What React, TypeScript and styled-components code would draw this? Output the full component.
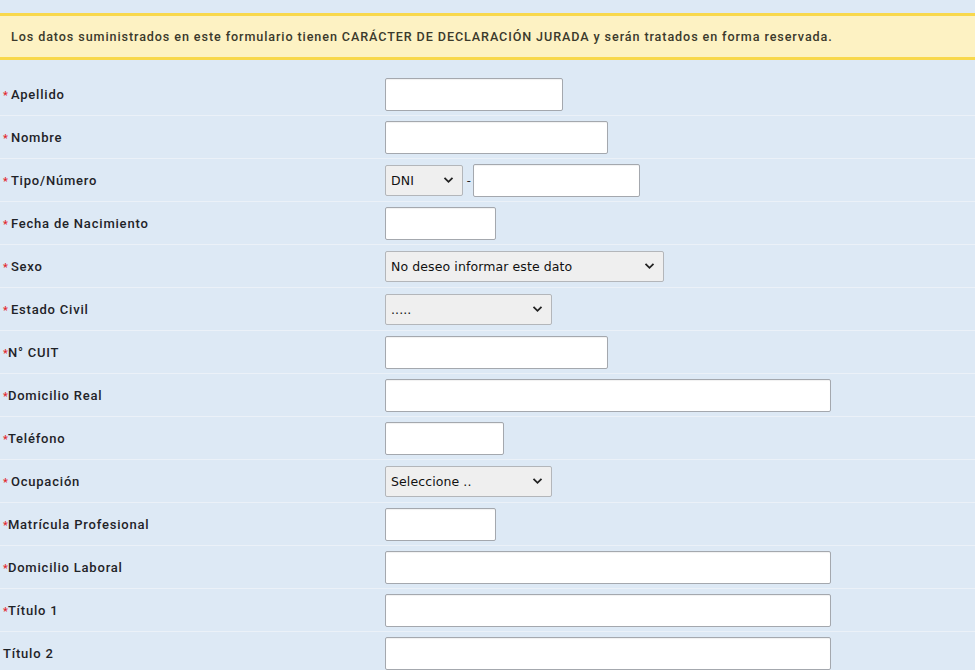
import React from "react";
import styled, { createGlobalStyle } from "styled-components";

const Global = createGlobalStyle`
  html, body { margin: 0; padding: 0; background: #dde9f5; }
  body { font-family: Roboto, "Liberation Sans", sans-serif; overflow: hidden; }
`;

const Page = styled.div`
  width: 975px;
  height: 670px;
  background: #dde9f5;
  padding-top: 13px;
  box-sizing: border-box;
  overflow: hidden;
`;

const Banner = styled.div`
  background: #fdf2c3;
  border-top: 3px solid #f8d84c;
  border-bottom: 3px solid #f8d84c;
  height: 41px;
  display: flex;
  align-items: center;
  padding-left: 11px;
  font-size: 12.6px;
  color: #3b3a2c;
  font-weight: 500;
  letter-spacing: 0.9px;
  white-space: nowrap;
`;

const Form = styled.div`
  margin-top: 13px;
  display: flex;
  flex-direction: column;
`;

const Row = styled.div`
  display: grid;
  grid-template-columns: 385px 1fr;
  align-items: center;
  height: 43px;
  border-bottom: 1px solid #ebf1f8;
  box-sizing: border-box;
`;

const Label = styled.div`
  padding-left: 3px;
  font-size: 13px;
  font-weight: 500;
  letter-spacing: 0.8px;
  color: #1f2328;
  display: flex;
  align-items: baseline;
`;

const Star = styled.span<{ $gap?: boolean }>`
  color: #e2262b;
  font-size: 11px;
  letter-spacing: 0;
  margin-right: ${(p) => (p.$gap ? "3px" : "0")};
`;

const Controls = styled.div`
  display: flex;
  align-items: center;
`;

const Input = styled.input<{ $w: number }>`
  width: ${(p) => p.$w}px;
  height: 33px;
  box-sizing: border-box;
  background: #fff;
  border: 1px solid #a4a8ae;
  border-radius: 2px;
  box-shadow: inset 0 1px 1px rgba(0, 0, 0, 0.06);
  margin: 0;
  padding: 0 6px;
`;

const SelectBox = styled.div<{ $w: number }>`
  width: ${(p) => p.$w}px;
  height: 31px;
  box-sizing: border-box;
  background: #efefef;
  border: 1px solid #b3b6ba;
  border-radius: 2px;
  display: flex;
  align-items: center;
  justify-content: space-between;
  padding: 0 8px 0 5px;
  font-family: "DejaVu Sans", "Liberation Sans", sans-serif;
  font-size: 12.5px;
  letter-spacing: 0.1px;
  color: #111;
`;

const Dash = styled.span`
  margin: 0 2px 0 4px;
  font-size: 13px;
  color: #222;
`;

const Chevron = () => (
  <svg width="11" height="8" viewBox="0 0 11 8">
    <path d="M1.5 1.8 L5.5 5.8 L9.5 1.8" fill="none" stroke="#222" strokeWidth="1.8" />
  </svg>
);

const Select = ({ w, text }: { w: number; text: string }) => (
  <SelectBox $w={w}>
    <span>{text}</span>
    <Chevron />
  </SelectBox>
);

type Field = {
  label: string;
  star: "gap" | "tight" | "none";
  control: React.ReactNode;
};

const fields: Field[] = [
  { label: "Apellido", star: "gap", control: <Input $w={178} /> },
  { label: "Nombre", star: "gap", control: <Input $w={223} /> },
  {
    label: "Tipo/Número",
    star: "gap",
    control: (
      <>
        <Select w={78} text="DNI" />
        <Dash>-</Dash>
        <Input $w={167} />
      </>
    ),
  },
  { label: "Fecha de Nacimiento", star: "gap", control: <Input $w={111} /> },
  { label: "Sexo", star: "gap", control: <Select w={279} text="No deseo informar este dato" /> },
  { label: "Estado Civil", star: "gap", control: <Select w={167} text="....." /> },
  { label: "N° CUIT", star: "tight", control: <Input $w={223} /> },
  { label: "Domicilio Real", star: "tight", control: <Input $w={446} /> },
  { label: "Teléfono", star: "tight", control: <Input $w={119} /> },
  { label: "Ocupación", star: "gap", control: <Select w={167} text="Seleccione .." /> },
  { label: "Matrícula Profesional", star: "tight", control: <Input $w={111} /> },
  { label: "Domicilio Laboral", star: "tight", control: <Input $w={446} /> },
  { label: "Título 1", star: "tight", control: <Input $w={446} /> },
  { label: "Título 2", star: "none", control: <Input $w={446} /> },
];

export default function App() {
  return (
    <Page>
      <Global />
      <Banner>
        Los datos suministrados en este formulario tienen CARÁCTER DE DECLARACIÓN JURADA y serán tratados en forma reservada.
      </Banner>
      <Form>
        {fields.map((f) => (
          <Row key={f.label}>
            <Label>
              {f.star !== "none" && <Star $gap={f.star === "gap"}>*</Star>}
              {f.label}
            </Label>
            <Controls>{f.control}</Controls>
          </Row>
        ))}
      </Form>
    </Page>
  );
}
